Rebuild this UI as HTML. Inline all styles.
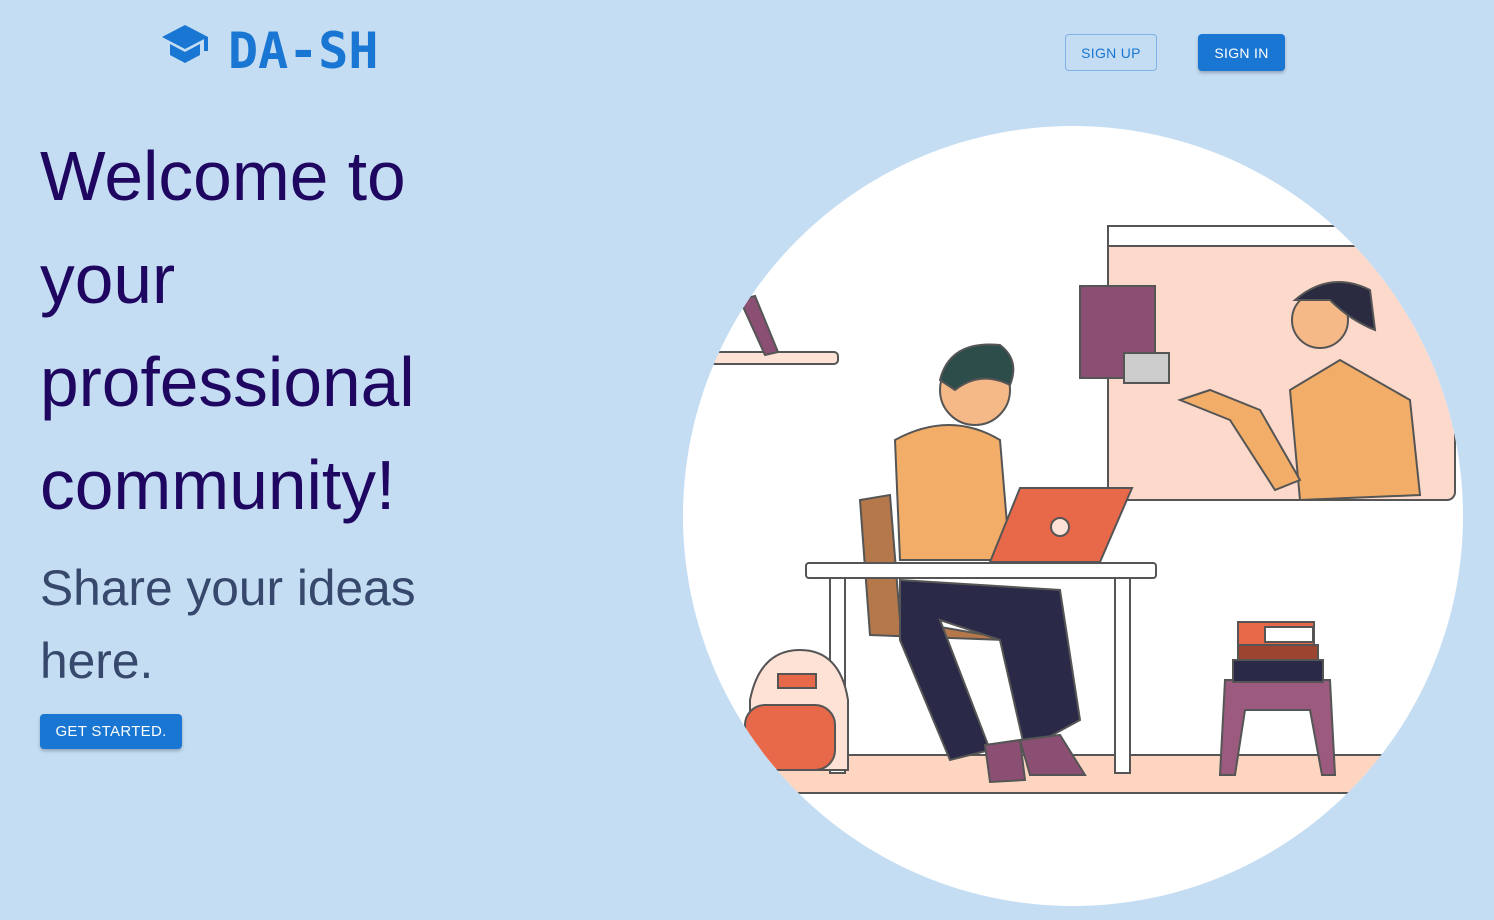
<!DOCTYPE html>
<html><head><meta charset="utf-8"><style>
html,body{margin:0;padding:0;}
body{width:1494px;height:920px;background:#c5ddf3;position:relative;overflow:hidden;font-family:"Liberation Sans",sans-serif;}
.logo{position:absolute;left:228px;top:21px;font-family:"DejaVu Sans Mono","Liberation Mono",monospace;font-weight:bold;font-size:50px;color:#1976d2;letter-spacing:0px;line-height:60px;}
.btn{position:absolute;font-size:14px;letter-spacing:.3px;display:flex;align-items:center;justify-content:center;border-radius:4px;box-sizing:border-box;}
.l{position:absolute;left:40px;line-height:1;white-space:nowrap;}
.h{font-size:69.5px;color:#1f0660;}
.s{font-size:49.7px;color:#36486b;}
</style></head><body>
<svg style="position:absolute;left:162px;top:24px" width="48" height="40" viewBox="0 0 48 40">
<path d="M23 1 L46 13 L23 25 L0 13 Z" fill="#1976d2"/>
<path d="M8 20 L8 31 L23 39 L38 31 L38 20 L23 28 Z" fill="#1976d2"/>
<rect x="42" y="13" width="4" height="14" fill="#1976d2"/>
</svg>
<div class="logo">DA-SH</div>
<div class="btn" style="left:1065px;top:34px;width:92px;height:37px;border:1px solid #7fb0e6;color:#1976d2;">SIGN UP</div>
<div class="btn" style="left:1198px;top:34px;width:87px;height:37px;background:#1976d2;color:#fff;box-shadow:0 2px 3px rgba(0,0,0,.25);">SIGN IN</div>

<div class="l h" style="top:142px">Welcome to</div>
<div class="l h" style="top:245px">your</div>
<div class="l h" style="top:348px">professional</div>
<div class="l h" style="top:451px">community!</div>
<div class="l s" style="top:564px">Share your ideas</div>
<div class="l s" style="top:637px">here.</div>
<div class="btn" style="left:40px;top:714px;width:142px;height:35px;background:#1976d2;color:#fff;font-size:15px;box-shadow:0 2px 3px rgba(0,0,0,.25);">GET STARTED.</div>

<svg style="position:absolute;left:0;top:0" width="1494" height="920">
<defs><clipPath id="c"><circle cx="1073" cy="516" r="390"/></clipPath></defs>
<circle cx="1073" cy="516" r="390" fill="#fff"/>
<g clip-path="url(#c)" stroke="#555" stroke-width="2">
<polygon points="760,755 1400,755 1400,793 760,793" fill="#fdd5c0"/>
<rect x="1108" y="226" width="347" height="274" rx="8" fill="#fdd9cc"/>
<rect x="1108" y="226" width="347" height="20" fill="#fff"/>
<rect x="660" y="352" width="178" height="12" rx="4" fill="#fde2d5"/>
<polygon points="740,300 755,296 778,352 765,355" fill="#8b4f74"/>
<rect x="1080" y="286" width="75" height="92" fill="#8b4f74"/>
<rect x="1124" y="353" width="45" height="30" fill="#ccc"/>
<path d="M1300,500 L1290,390 L1340,360 L1410,400 L1420,495 Z" fill="#f2ae68"/>
<circle cx="1320" cy="320" r="28" fill="#f5b987"/>
<path d="M1295,300 Q1330,270 1370,290 L1375,330 Q1350,320 1330,300 Z" fill="#2a2a40"/>
<path d="M1180,400 L1230,420 L1275,490 L1300,480 L1260,410 L1210,390 Z" fill="#f2ae68"/>
<path d="M860,500 L890,495 L900,620 L1015,640 L1005,640 L870,635 Z" fill="#b5784a"/>
<path d="M895,440 Q950,410 1000,440 L1010,560 L900,560 Z" fill="#f2ae68"/>
<circle cx="975" cy="390" r="35" fill="#f5b987"/>
<path d="M940,380 Q950,340 1000,345 Q1020,360 1010,385 Q980,370 955,390 Z" fill="#2c4d4a"/>
<path d="M900,580 L1060,590 L1080,720 L1025,750 L1000,640 L940,620 L990,750 L950,760 L900,640 Z" fill="#2a2a48"/>
<path d="M985,745 L1020,740 L1025,780 L990,782 Z" fill="#8b4f74"/>
<path d="M1020,740 L1060,735 L1085,775 L1030,775 Z" fill="#8b4f74"/>
<polygon points="990,562 1020,488 1132,488 1100,562" fill="#e8684a"/>
<circle cx="1060" cy="527" r="9" fill="#fde2d5"/>
<rect x="806" y="563" width="350" height="15" rx="3" fill="#fff"/>
<rect x="830" y="578" width="15" height="195" fill="#fff"/>
<rect x="1115" y="578" width="15" height="195" fill="#fff"/>
<path d="M750,700 Q760,650 800,650 Q840,650 848,700 L848,770 L750,770 Z" fill="#fde2d5"/>
<rect x="745" y="705" width="90" height="65" rx="20" fill="#e8684a"/>
<rect x="778" y="674" width="38" height="14" fill="#e8684a"/>
<path d="M1225,680 L1330,680 L1335,775 L1322,775 L1310,710 L1245,710 L1235,775 L1220,775 Z" fill="#9c5b7e"/>
<rect x="1233" y="660" width="90" height="22" fill="#2a2a48"/>
<rect x="1238" y="645" width="80" height="15" fill="#9c4430"/>
<rect x="1238" y="622" width="76" height="23" fill="#e8684a"/>
<rect x="1265" y="627" width="48" height="15" fill="#fff"/>
</g>
</svg>
</body></html>
